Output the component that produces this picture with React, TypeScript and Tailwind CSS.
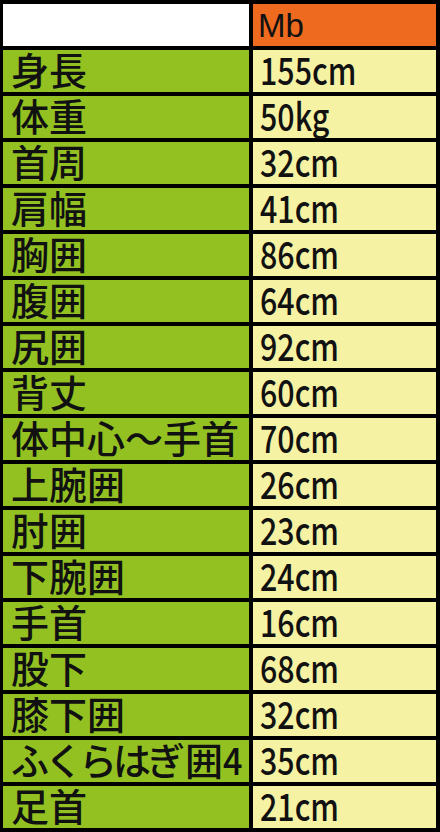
import React from "react";

const rows: [string, string][] = [
  ["身長", "155cm"],
  ["体重", "50kg"],
  ["首周", "32cm"],
  ["肩幅", "41cm"],
  ["胸囲", "86cm"],
  ["腹囲", "64cm"],
  ["尻囲", "92cm"],
  ["背丈", "60cm"],
  ["体中心～手首", "70cm"],
  ["上腕囲", "26cm"],
  ["肘囲", "23cm"],
  ["下腕囲", "24cm"],
  ["手首", "16cm"],
  ["股下", "68cm"],
  ["膝下囲", "32cm"],
  ["ふくらはぎ囲4", "35cm"],
  ["足首", "21cm"],
];

const jp = "font-['Noto_Sans_CJK_JP',sans-serif]";

export default function App() {
  return (
    <div className="w-[440px] h-[832px] bg-black grid grid-cols-[246px_183px] auto-rows-[42px] gap-[4px] pt-[4px] pl-[3px] pr-[4px] pb-[4px] overflow-hidden text-[#111]">
      <div className="bg-white" />
      <div className="bg-[#ee6a1f] flex items-end pl-[5px] pb-[4px] font-['Liberation_Sans',Arial,sans-serif] text-[33px] leading-[33px]">
        Mb
      </div>
      {rows.map(([label, value]) => (
        <React.Fragment key={label}>
          <div className={`bg-[#92c121] flex items-end pl-[8px] pb-[4px] whitespace-nowrap ${jp} font-medium text-[38px] leading-[38px]`}>
            {label === "ふくらはぎ囲4" ? (
              <span>
                <span className="tracking-[-4px]">ふくらはぎ</span>
                <span className="ml-[4px]">囲</span>
                <span className="inline-block origin-left scale-x-[0.9]">4</span>
              </span>
            ) : (
              label
            )}
          </div>
          <div className={`bg-[#f6f2a4] flex items-end pl-[7px] pb-[4px] whitespace-nowrap ${jp} font-medium text-[38px] leading-[38px]`}>
            <span className="inline-block origin-left scale-x-[0.8]">{value}</span>
          </div>
        </React.Fragment>
      ))}
    </div>
  );
}
